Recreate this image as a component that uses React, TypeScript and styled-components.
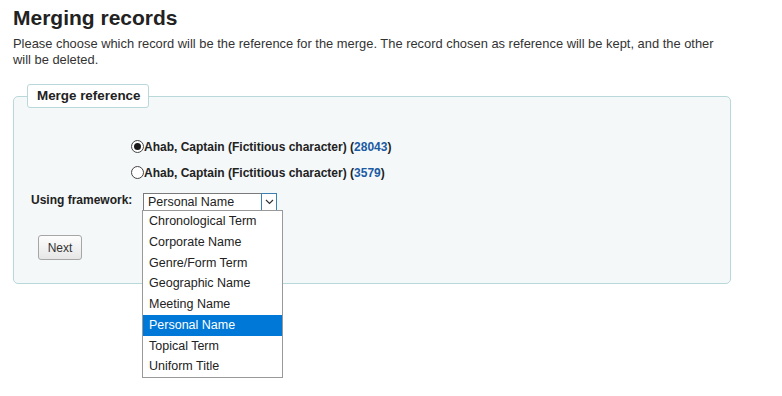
import React from "react";
import styled, { createGlobalStyle } from "styled-components";

const Global = createGlobalStyle`
  html, body { margin: 0; padding: 0; background: #fff; }
  body { font-family: "Liberation Sans", Arial, sans-serif; color: #222; }
`;

const Page = styled.main`
  width: 731px;
  min-height: 396px;
  box-sizing: border-box;
  padding: 6px 0 0 13px;
`;

const Title = styled.h1`
  margin: 0;
  font-size: 21px;
  line-height: 24px;
  font-weight: bold;
  color: #222;
`;

const Intro = styled.p`
  margin: 6px 0 0;
  font-size: 12.9px;
  line-height: 16px;
  color: #333;
`;

const Panel = styled.section`
  margin-top: 28px;
  padding: 0 0 23px 17px;
  box-sizing: border-box;
  width: 718px;
  border: 1px solid #b9d8d9;
  border-radius: 5px;
  background: #f4f8f9;
  display: flex;
  flex-direction: column;
`;

const Legend = styled.h2`
  align-self: flex-start;
  margin: -13px 0 0 -4px;
  padding: 0 8px 0 9px;
  height: 24px;
  box-sizing: border-box;
  line-height: 22px;
  font-size: 13.4px;
  font-weight: bold;
  color: #222;
  background: #fff;
  border: 1px solid #b9d8d9;
  border-radius: 3px;
`;

const Rows = styled.div`
  display: flex;
  flex-direction: column;
  padding-top: 30.5px;
`;

const RadioRow = styled.label`
  display: flex;
  align-items: center;
  height: 16px;
  margin: 0 0 10px 100px;
  font-size: 12px;
  line-height: 16px;
  font-weight: bold;
  color: #222;
`;

const Radio = styled.span<{ $checked?: boolean }>`
  position: relative;
  width: 13px;
  height: 13px;
  box-sizing: border-box;
  border: 1px solid #444;
  border-radius: 50%;
  background: #fff;
  flex: none;
  &::after {
    content: "";
    display: ${(p) => (p.$checked ? "block" : "none")};
    position: absolute;
    left: 2px;
    top: 2px;
    width: 7px;
    height: 7px;
    border-radius: 50%;
    background: #1a1a1a;
  }
`;

const RecordLink = styled.a`
  color: #1b5ba3;
  text-decoration: none;
`;

const FrameworkRow = styled.div`
  display: flex;
  align-items: flex-start;
  margin-top: 1px;
`;

const FieldLabel = styled.label`
  width: 112px;
  font-size: 12px;
  line-height: 16px;
  font-weight: bold;
  color: #222;
`;

const SelectWrap = styled.div`
  position: relative;
  margin-top: 1.5px;
`;

const SelectBox = styled.div`
  display: flex;
  width: 134px;
  height: 18px;
  box-sizing: border-box;
  border: 1px solid #7a7a7a;
  background: #fff;
`;

const SelectValue = styled.span`
  flex: 1;
  padding-left: 4px;
  font-size: 12.5px;
  line-height: 16px;
  color: #222;
`;

const ArrowBox = styled.span`
  width: 16px;
  height: 18px;
  margin: -1px -1px -1px 0;
  box-sizing: border-box;
  border: 1px solid #3c7fb1;
  background: #fff;
  display: flex;
  align-items: center;
  justify-content: center;
`;

const Dropdown = styled.ul`
  position: absolute;
  left: -1px;
  top: 17px;
  z-index: 2;
  width: 141px;
  box-sizing: border-box;
  margin: 0;
  padding: 0;
  list-style: none;
  border: 1px solid #999;
  background: #fff;
`;

const Option = styled.li<{ $selected?: boolean }>`
  height: 20.75px;
  box-sizing: border-box;
  padding: 1px 0 0 6px;
  font-size: 12.5px;
  line-height: 19.75px;
  color: ${(p) => (p.$selected ? "#fff" : "#222")};
  background: ${(p) => (p.$selected ? "#0078d7" : "transparent")};
  white-space: nowrap;
`;

const NextButton = styled.button`
  margin: 24px 0 0 7px;
  align-self: flex-start;
  width: 44px;
  height: 25px;
  padding: 0;
  box-sizing: border-box;
  font-family: "Liberation Sans", Arial, sans-serif;
  font-size: 12px;
  color: #333;
  border: 1px solid #a6a6a6;
  border-radius: 3px;
  background: linear-gradient(#fdfdfd, #e6e6e6);
`;

const options = [
  "Chronological Term",
  "Corporate Name",
  "Genre/Form Term",
  "Geographic Name",
  "Meeting Name",
  "Personal Name",
  "Topical Term",
  "Uniform Title",
];

const records = [
  { id: "28043", checked: true },
  { id: "3579", checked: false },
];

export default function App() {
  return (
    <>
      <Global />
      <Page>
        <Title>Merging records</Title>
        <Intro>
          Please choose which record will be the reference for the merge. The record chosen as
          reference will be kept, and the other will be deleted.
        </Intro>
        <Panel>
          <Legend>Merge reference</Legend>
          <Rows>
            {records.map((r) => (
              <RadioRow key={r.id}>
                <Radio $checked={r.checked} />
                Ahab, Captain (Fictitious character) (<RecordLink href="#">{r.id}</RecordLink>)
              </RadioRow>
            ))}
            <FrameworkRow>
              <FieldLabel>Using framework:</FieldLabel>
              <SelectWrap>
                <SelectBox>
                  <SelectValue>Personal Name</SelectValue>
                  <ArrowBox>
                    <svg width="9" height="6" viewBox="0 0 9 6">
                      <path d="M1 1 L4.5 4.5 L8 1" fill="none" stroke="#333" strokeWidth="1.2" />
                    </svg>
                  </ArrowBox>
                </SelectBox>
                <Dropdown>
                  {options.map((o) => (
                    <Option key={o} $selected={o === "Personal Name"}>
                      {o}
                    </Option>
                  ))}
                </Dropdown>
              </SelectWrap>
            </FrameworkRow>
            <NextButton>Next</NextButton>
          </Rows>
        </Panel>
      </Page>
    </>
  );
}
